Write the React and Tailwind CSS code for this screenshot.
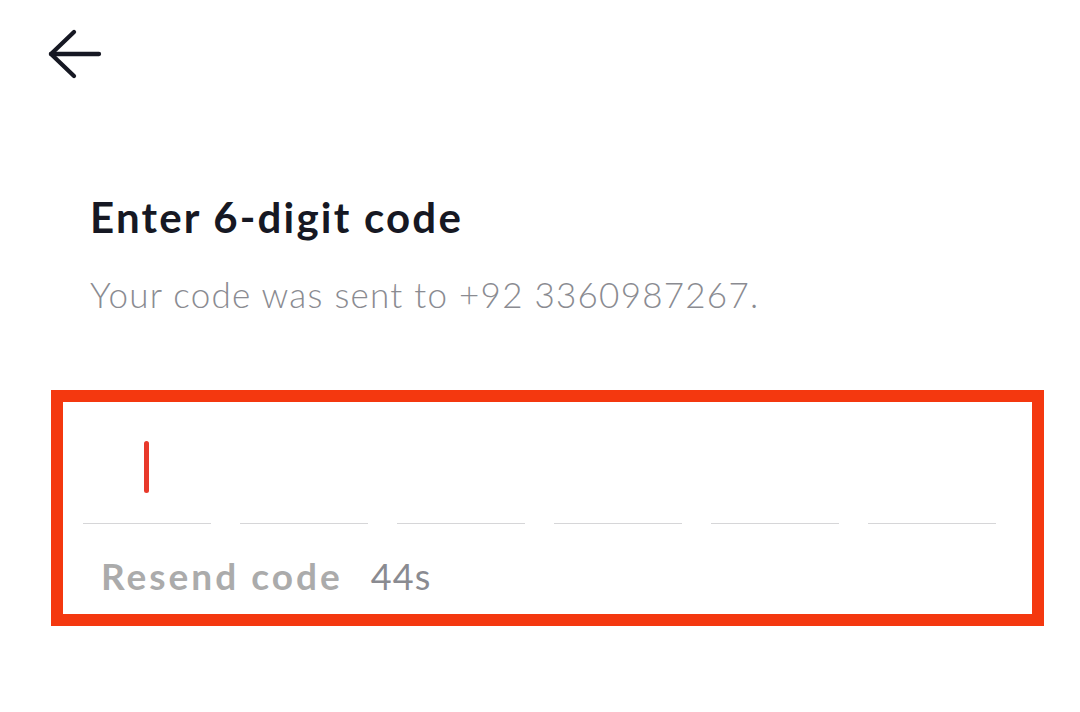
export default function App() {
  const boxes = [0, 1, 2, 3, 4, 5];
  return (
    <div className="w-[1080px] h-[712px] bg-white overflow-hidden" style={{ fontFamily: "Lato, 'Liberation Sans', sans-serif" }}>
      <div className="pl-[46px] pt-[28px] h-[56px]">
        <svg className="block" width="56" height="54" viewBox="0 0 56 54" fill="none" stroke="#161823" strokeWidth="4.3" strokeLinecap="round" strokeLinejoin="round">
          <path d="M53 26 H5" />
          <path d="M28 4 L5 26 L28 48" />
        </svg>
      </div>
      <div className="pl-[90px] pt-[136px]">
        <h1 className="text-[42px] leading-[50px] font-bold text-[#161823] tracking-[2.2px]">Enter 6-digit code</h1>
        <p className="mt-[31px] text-[35px] leading-[42px] font-light text-[#8a8b91] tracking-[1.25px]">Your code was sent to +92 3360987267.</p>
      </div>
      <div className="ml-[51px] mt-[75px] w-[993px] h-[236px] border-[12px] border-[#f4380f] pl-[20px] pr-[35px] pt-[38px]">
        <div className="flex gap-[29px]">
          {boxes.map((i) => (
            <div key={i} className="w-[128px] h-[84px] border-b border-[#d6d6d8] flex items-start pl-[61px] pt-[1px]">
              {i === 0 && <div className="w-[5px] h-[52px] rounded-full bg-[#e8392b]" />}
            </div>
          ))}
        </div>
        <div className="flex items-baseline mt-[32px] pl-[18px]">
          <span className="text-[37px] leading-[40px] font-bold text-[#ababab] tracking-[3px]">Resend code</span>
          <span className="ml-[28px] text-[36px] leading-[40px] text-[#8a8b91] tracking-[1.2px]">44s</span>
        </div>
      </div>
    </div>
  );
}
